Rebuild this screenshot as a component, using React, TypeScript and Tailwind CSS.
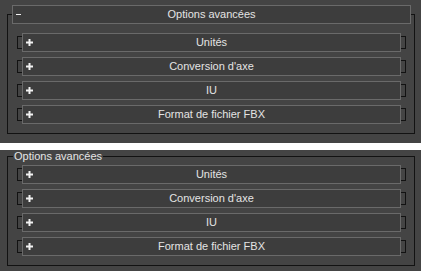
import { FunctionComponent } from "react";

const font = "font-['Liberation_Sans',Arial,sans-serif] text-[11px] text-[#e4e4e4]";

const Plus: FunctionComponent = () => (
  <svg width="7" height="7" viewBox="0 0 7 7" className="block">
    <rect x="2.5" y="0" width="2" height="7" fill="#f2f2f2" />
    <rect x="0" y="2.5" width="7" height="2" fill="#f2f2f2" />
  </svg>
);

const Row: FunctionComponent<{ label: string }> = ({ label }) => {
  return (
    <div className="flex flex-row items-center">
      <div className="w-[5px] h-[13px] border-l border-t border-b border-[#121212]" />
      <div className="grid grid-cols-[20px_1fr_20px] items-center w-[379px] h-[19px] bg-[#3d3d3d] border border-[#6a6a6a]">
        <div className="pl-[3px] flex items-center">
          <Plus />
        </div>
        <div className={`${font} text-center leading-[17px] whitespace-nowrap`}>{label}</div>
        <div />
      </div>
      <div className="w-[5px] h-[13px] border-r border-t border-b border-[#121212]" />
    </div>
  );
};

const labels = ["Unités", "Conversion d'axe", "IU", "Format de fichier FBX"];

const App: FunctionComponent = () => {
  return (
    <div className="w-[421px] h-[271px] bg-white flex flex-col">
      {/* rollout ouvert */}
      <div className="h-[143px] bg-[#444444] pt-[14px]">
        <div className="ml-[7px] w-[408px] h-[120px] border border-[#121212] flex flex-col">
          <div className="-mt-[10px] ml-[4px] w-[399px] h-[19px] bg-[#3d3d3d] border border-[#6a6a6a] grid grid-cols-[20px_1fr_20px] items-center">
            <div className="pl-[3px] flex items-center">
              <div className="w-[5px] h-[1px] bg-[#f2f2f2]" />
            </div>
            <div className={`${font} text-center leading-[17px] whitespace-nowrap`}>Options avancées</div>
            <div />
          </div>
          <div className="mt-[9px] pl-[9px] flex flex-col gap-[5px]">
            {labels.map((l) => (
              <Row key={l} label={l} />
            ))}
          </div>
        </div>
      </div>

      <div className="h-[7px] bg-white" />

      {/* groupe */}
      <div className="h-[121px] bg-[#444444] pt-[6px]">
        <div className="ml-[7px] w-[408px] h-[110px] border border-[#121212] flex flex-col">
          <div className={`${font} -mt-[7px] ml-[5px] px-[1px] w-fit bg-[#444444] leading-[13px] whitespace-nowrap`}>
            Options avancées
          </div>
          <div className="mt-[2px] pl-[9px] flex flex-col gap-[5px]">
            {labels.map((l) => (
              <Row key={l} label={l} />
            ))}
          </div>
        </div>
      </div>
    </div>
  );
};

export default App;
